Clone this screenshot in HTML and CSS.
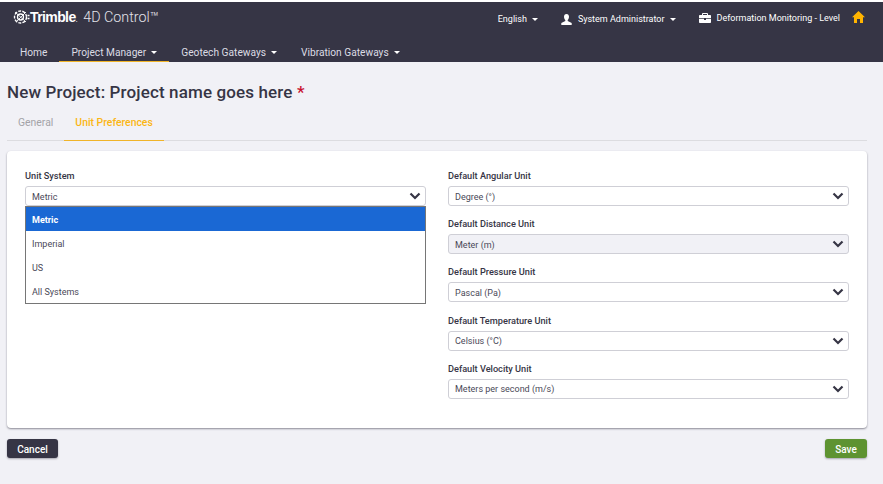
FILE: index.html
```html
<!DOCTYPE html>
<html>

<head>
    <title>4D Control</title>
    <link rel="stylesheet" href="styles.css">
</head>

<body>
    <div id="header">
        <div class="top-row">
            <div class="brand">
                <svg class="brand-mark" width="17" height="16" viewBox="0 0 17 16" fill="none" stroke="#fff">
                    <circle cx="7.5" cy="8" r="6" stroke-width="1.4" stroke-dasharray="3 1.2" />
                    <circle cx="7.5" cy="8" r="3" stroke-width="1.3" />
                    <path d="M2 3l11 10M13 3L3 13" stroke-width="0.9" />
                    <path d="M14.5 6.5h2M14.5 9.5h2" stroke-width="1.3" />
                </svg>
                <span class="brand-name">Trimble<small>.</small></span>
                <span class="brand-product">4D Control™</span>
            </div>
            <div class="top-links">
                <span class="top-link top-lang">English<i class="caret"></i></span>
                <span class="top-link top-user">
                    <svg width="11" height="11" viewBox="0 0 11 11" fill="#fff">
                        <path d="M5.500 0C7.200 0 8 1.200 8 2.800 8 4.300 7.300 5.600 6.700 6.100V7l4 2v2H.3V9l4-2v-.9C3.700 5.600 3 4.300 3 2.800 3 1.200 3.800 0 5.500 0z" />
                    </svg>
                    <span>System Administrator</span><i class="caret"></i>
                </span>
                <span class="top-link top-project">
                    <svg width="12" height="10" viewBox="0 0 12 10" fill="#fff">
                        <path d="M4 0h4l1 .6V2h2.200c.5 0 .8.300.8.800V5H0V2.800C0 2.300.3 2 .8 2H3V.6zM4 1v1h4V1zM0 5.800h5V7h2V5.800h5v3.400c0 .5-.3.8-.8.8H.8c-.5 0-.8-.3-.8-.8z" />
                    </svg>
                    <span>Deformation Monitoring - Level</span>
                </span>
                <svg class="top-home" width="13" height="12" viewBox="0 0 13 12" fill="#ffb400">
                    <path d="M6.500 0L13 6.200h-2V12H8V8H5v4H2V6.200H0z" />
                </svg>
            </div>
        </div>
        <div id="nav">
            <a class="nav-item">Home</a>
            <a class="nav-item nav-active">Project Manager<i class="caret"></i></a>
            <a class="nav-item">Geotech Gateways<i class="caret"></i></a>
            <a class="nav-item">Vibration Gateways<i class="caret"></i></a>
        </div>
    </div>

    <div id="page">
        <h1>New Project: Project name goes here <span class="required">*</span></h1>

        <div class="tabs">
            <a class="tab">General</a>
            <a class="tab tab-active">Unit Preferences</a>
        </div>

        <div class="card">
            <div class="col">
                <div class="field">
                    <label>Unit System</label>
                    <div class="select">Metric
                        <svg class="chevron" width="12" height="8" viewBox="0 0 12 8"><path d="M1.500 1.500L6 6l4.500-4.500" /></svg>
                    </div>
                    <div class="options">
                        <div class="option option-selected">Metric</div>
                        <div class="option">Imperial</div>
                        <div class="option">US</div>
                        <div class="option">All Systems</div>
                    </div>
                </div>
            </div>
            <div class="col">
                <div class="field">
                    <label>Default Angular Unit</label>
                    <div class="select">Degree (°)
                        <svg class="chevron" width="12" height="8" viewBox="0 0 12 8"><path d="M1.500 1.500L6 6l4.500-4.500" /></svg>
                    </div>
                </div>
                <div class="field">
                    <label>Default Distance Unit</label>
                    <div class="select select-disabled">Meter (m)
                        <svg class="chevron" width="12" height="8" viewBox="0 0 12 8"><path d="M1.500 1.500L6 6l4.500-4.500" /></svg>
                    </div>
                </div>
                <div class="field">
                    <label>Default Pressure Unit</label>
                    <div class="select">Pascal (Pa)
                        <svg class="chevron" width="12" height="8" viewBox="0 0 12 8"><path d="M1.500 1.500L6 6l4.500-4.500" /></svg>
                    </div>
                </div>
                <div class="field">
                    <label>Default Temperature Unit</label>
                    <div class="select">Celsius (°C)
                        <svg class="chevron" width="12" height="8" viewBox="0 0 12 8"><path d="M1.500 1.500L6 6l4.500-4.500" /></svg>
                    </div>
                </div>
                <div class="field">
                    <label>Default Velocity Unit</label>
                    <div class="select">Meters per second (m/s)
                        <svg class="chevron" width="12" height="8" viewBox="0 0 12 8"><path d="M1.500 1.500L6 6l4.500-4.500" /></svg>
                    </div>
                </div>
            </div>
        </div>

        <div class="actions">
            <button class="button button-dark">Cancel</button>
            <button class="button button-green">Save</button>
        </div>
    </div>
</body>

</html>
```

FILE: styles.css
```css
* {
    box-sizing: border-box;
}

html,
body {
    height: 100%;
}

body {
    margin: 0;
    padding: 2px 0 0;
    overflow: hidden;
    background-color: #f1f1f6;
    color: #363545;
    font-family: Roboto, "Liberation Sans", sans-serif;
    font-size: 10px;
    position: relative;
}

body::before {
    content: "";
    position: absolute;
    top: 0;
    left: 0;
    right: 0;
    height: 2px;
    background-color: #fff;
}

#header {
    background-color: #363545;
    color: #fff;
    height: 60px;
    display: flex;
    flex-direction: column;
    justify-content: space-between;
}

.top-row {
    display: flex;
    justify-content: space-between;
    align-items: flex-start;
    padding: 6px 18px 0 13px;
}

.brand {
    display: flex;
    align-items: center;
    height: 18px;
}

.brand-name {
    font-family: "Liberation Sans", sans-serif;
    font-weight: 700;
    font-size: 14px;
    letter-spacing: -0.6px;
}

.brand-name small {
    font-size: 8px;
    font-weight: 400;
}

.brand-product {
    margin-left: 6px;
    font-weight: 300;
    font-size: 14.3px;
    color: #e4e4ea;
}

.top-links {
    display: flex;
    align-items: center;
    padding-top: 5px;
    font-size: 9px;
}

.top-link {
    display: flex;
    align-items: center;
    white-space: nowrap;
}

.top-lang {
    margin-right: 23px;
}

.top-user {
    margin-right: 23px;
}

.top-user svg {
    margin-right: 6px;
}

.top-project {
    margin-right: 12px;
    position: relative;
    top: -1px;
}

.top-project svg {
    margin-right: 6px;
}

.top-home {
    position: relative;
    top: -2px;
}

.caret {
    display: inline-block;
    margin-left: 5px;
    border-top: 3px solid #fff;
    border-left: 3px solid transparent;
    border-right: 3px solid transparent;
}

#nav {
    display: flex;
    padding-left: 8px;
    height: 21px;
    font-size: 10.2px;
    color: #dcdce4;
}

.nav-item {
    display: flex;
    align-items: center;
    padding: 3px 12px 0;
    white-space: nowrap;
    border-bottom: 1px solid transparent;
}

.nav-active {
    border-bottom-color: #f0b429;
}

#page {
    padding: 0 16px 0 7px;
}

h1 {
    margin: 0;
    padding-top: 20px;
    height: 43px;
    font-size: 17px;
    line-height: 20px;
    font-weight: 500;
    letter-spacing: 0.13px;
}

.required {
    color: #c8102e;
}

.tabs {
    display: flex;
    height: 36px;
    border-bottom: 1px solid #dcdce0;
    font-size: 10.4px;
    padding-top: 1px;
}

.tab {
    padding: 0 11px;
    line-height: 33px;
    color: #a3a3a8;
}

.tab-active {
    color: #fbb614;
    font-weight: 500;
    border-bottom: 1px solid #f0b429;
    height: 35px;
}

.card {
    margin-top: 10px;
    height: 277px;
    padding: 19px 18px 0;
    display: flex;
    gap: 22px;
    background-color: #fff;
    border-radius: 4px;
    box-shadow: 0 1px 2px rgba(54, 53, 69, 0.55);
}

.col {
    flex: 1;
}

.field {
    position: relative;
    height: 48.2px;
}

label {
    display: block;
    height: 16px;
    line-height: 12px;
    font-size: 9.2px;
    font-weight: 500;
}

.select {
    display: flex;
    align-items: center;
    justify-content: space-between;
    height: 20px;
    padding: 1px 6px 0;
    background-color: #fff;
    border: 1px solid #cfcfd6;
    border-radius: 3px;
    font-size: 9px;
    color: #4a4958;
}

.select-disabled {
    background-color: #f1f1f6;
}

.chevron {
    fill: none;
    stroke: #363545;
    stroke-width: 2.2;
    margin: -1px -2px 0 0;
}

.options {
    position: absolute;
    top: 36px;
    left: 0;
    right: 0;
    z-index: 1;
    background-color: #fff;
    border: 1px solid #767676;
    font-size: 9px;
    color: #4a4958;
}

.option {
    height: 24px;
    line-height: 26px;
    padding-left: 6px;
}

.option-selected {
    background-color: #1a68d4;
    color: #fff;
    font-weight: 700;
}

.actions {
    display: flex;
    justify-content: space-between;
    margin-top: 11px;
}

.button {
    height: 19px;
    padding: 1px 0 0;
    border: none;
    border-radius: 3px;
    color: #fff;
    font-family: inherit;
    font-size: 10px;
    font-weight: 500;
    box-shadow: 0 1px 2px rgba(54, 53, 69, 0.4);
}

.button-dark {
    width: 51px;
    background-color: #363545;
}

.button-green {
    width: 42px;
    background-color: #5e9331;
}
```
